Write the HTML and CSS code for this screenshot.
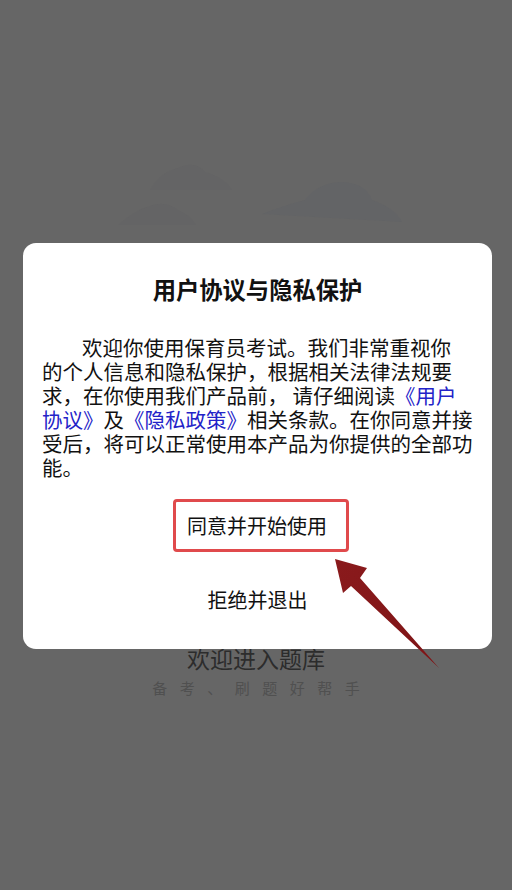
FILE: index.html
```html
<!DOCTYPE html>
<html lang="zh-CN">
<head>
<meta charset="utf-8">
<title>用户协议与隐私保护</title>
<link rel="stylesheet" href="styles.css">
</head>
<body>
<div class="page">
  <svg class="clouds" width="512" height="90" viewBox="0 150 512 90">
    <path d="M150 190 Q160 172 178 168 Q195 160 205 172 Q225 178 232 190 Z" fill="#646465"/>
    <path d="M118 225 Q135 210 150 206 Q165 200 178 210 Q190 215 196 225 Z" fill="#646465"/>
    <path d="M262 214 Q285 205 305 200 Q318 183 340 182 Q365 182 372 200 Q395 208 402 222 Z" fill="#636466"/>
  </svg>
  <div class="welcome">欢迎进入题库</div>
  <div class="slogan">备考、刷题好帮手</div>
</div>

<div class="dialog">
  <h1 class="title">用户协议与隐私保护</h1>
  <p class="body">
    <span class="indent"></span>欢迎你使用保育员考试。我们非常重视你<br>的个人信息和隐私保护，根据相关法律法规要<br>求，在你使用我们产品前，&nbsp;请仔细阅读<a class="link">《用户<br>协议》</a>及<a class="link">《隐私政策》</a>相关条款。在你同意并接<br>受后，将可以正常使用本产品为你提供的全部功<br>能。
  </p>
  <div class="agree">同意并开始使用</div>
  <div class="refuse">拒绝并退出</div>
</div>

<svg class="arrow" width="120" height="120" viewBox="330 554 120 120">
  <defs>
    <linearGradient id="ag" x1="0" y1="0" x2="1" y2="1">
      <stop offset="0" stop-color="#8a1a1c"/>
      <stop offset="1" stop-color="#7e1416"/>
    </linearGradient>
  </defs>
  <polygon points="335,559 367,568 360,578 439,668 351,586 343,593" fill="url(#ag)"/>
</svg>
</body>
</html>
```

FILE: styles.css
```css
html, body {
  margin: 0;
  padding: 0;
}
body {
  width: 512px;
  height: 890px;
  background: #666666;
  font-family: "Noto Sans CJK SC", "Noto Sans", sans-serif;
  position: relative;
  overflow: hidden;
}
.page {
  display: flex;
  flex-direction: column;
  align-items: center;
  padding-top: 150px;
}
.clouds {
  display: block;
}
.welcome {
  margin-top: 405px;
  font-size: 23px;
  line-height: 26px;
  color: #2c2c2c;
}
.slogan {
  margin-top: 7px;
  font-size: 15px;
  line-height: 20px;
  letter-spacing: 12.5px;
  margin-right: -12.5px;
  color: #505050;
}
.dialog {
  position: absolute;
  left: 23px;
  top: 243px;
  width: 469px;
  height: 406px;
  box-sizing: border-box;
  background: #ffffff;
  border-radius: 13px;
  padding: 29px 19px 0 19px;
  display: flex;
  flex-direction: column;
}
.title {
  margin: 0;
  text-align: center;
  font-size: 23.3px;
  line-height: 34px;
  font-weight: 700;
  color: #111111;
}
.body {
  margin: 29px 0 0 0;
  font-size: 20.5px;
  line-height: 24px;
  color: #111111;
  white-space: nowrap;
}
.indent {
  display: inline-block;
  width: 40px;
}
.link {
  color: #2323c8;
}
.agree {
  margin-top: 20px;
  margin-left: 131px;
  align-self: flex-start;
  width: 176px;
  height: 53px;
  box-sizing: border-box;
  border: 3px solid #e04a4c;
  border-radius: 4px;
  padding-left: 11px;
  display: flex;
  align-items: center;
  font-size: 20px;
  color: #111111;
}
.refuse {
  margin-top: 36px;
  text-align: center;
  font-size: 20px;
  line-height: 24px;
  color: #111111;
}
.arrow {
  position: absolute;
  left: 330px;
  top: 554px;
}
```
